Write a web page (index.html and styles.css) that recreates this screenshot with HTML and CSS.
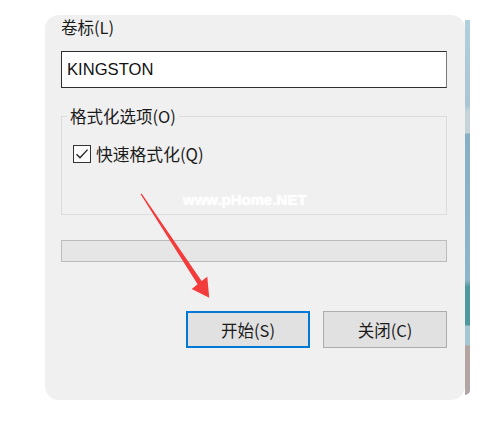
FILE: index.html
```html
<!DOCTYPE html>
<html lang="zh-CN">
<head>
<meta charset="utf-8">
<title>格式化</title>
<link rel="stylesheet" href="styles.css">
</head>
<body>
<div class="scene">
  <div class="dialog">
    <div class="field-label">卷标(L)</div>
    <div class="textbox">KINGSTON</div>
    <fieldset class="group">
      <legend class="group-title">格式化选项(O)</legend>
      <label class="check-row">
        <span class="checkbox">
          <svg width="16" height="16" viewBox="0 0 16 16"><path d="M2.5 8.2 L6 11.8 L13.6 3.6" fill="none" stroke="#222" stroke-width="1.3"/></svg>
        </span>
        <span class="check-text">快速格式化(Q)</span>
      </label>
    </fieldset>
    <div class="progress"></div>
    <div class="buttons">
      <div class="btn btn-default">开始(S)</div>
      <div class="btn">关闭(C)</div>
    </div>
  </div>
  <div class="behind"></div>
</div>
<div class="watermark">www.pHome.NET</div>
<svg class="arrow" width="498" height="421" viewBox="0 0 498 421">
  <polygon points="140.6,194.3 141.6,193.6 201.6,281.1 207.3,276.7 209.2,297.8 191.7,289 197.6,284.2" fill="#f43b3b"/>
</svg>
</body>
</html>
```
FILE: styles.css
```css
html, body {
  margin: 0;
  padding: 0;
  background: #ffffff;
}
body {
  position: relative;
  width: 498px;
  height: 421px;
  overflow: hidden;
  font-family: "Noto Sans CJK SC", "Microsoft YaHei", sans-serif;
  color: #1b1b1b;
}
.scene {
  display: flex;
  margin: 15px 0 0 45px;
}
.dialog {
  box-sizing: border-box;
  width: 420px;
  height: 385px;
  background: #f0f0f0;
  border-radius: 14px;
  padding: 1px 18px 0 16px;
  display: flex;
  flex-direction: column;
}
.behind {
  width: 5px;
  margin: 5px 0 5px 0;
  border-radius: 0 0 5px 0;
  background: linear-gradient(to bottom,
    #b3cedb 0px, #a9c6d4 85px,
    #c6d3d9 92px, #c6d3d9 113px,
    #86b0c3 114px, #8fb6c8 260px,
    #4f999c 267px, #4f999c 305px,
    #a6c7d1 306px, #a6c7d1 325px,
    #b4a4a1 326px, #b2a6a6 375px);
}
.field-label {
  font-size: 16.5px;
  line-height: 22px;
}
.textbox {
  box-sizing: border-box;
  margin-top: 13px;
  height: 37px;
  background: #ffffff;
  border: 1px solid #2e2e2e;
  border-right-color: #7a7a7a;
  padding: 0 0 0 5px;
  font-family: "Liberation Sans", Arial, sans-serif;
  font-size: 16.6px;
  line-height: 35px;
  color: #111;
}
.group {
  margin: 18px 0 0 0;
  padding: 19px 0 51px 0;
  border: 1px solid #dcdcdc;
  min-width: 0;
}
.group-title {
  margin-left: 5px;
  padding: 0 3px;
  font-size: 16.5px;
  line-height: 20px;
}
.check-row {
  display: flex;
  align-items: center;
  gap: 5px;
  height: 18px;
  margin-left: 11px;
}
.checkbox {
  box-sizing: border-box;
  width: 18px;
  height: 18px;
  border: 1px solid #333;
  background: #fbfbfb;
  display: flex;
  align-items: center;
  justify-content: center;
}
.check-text {
  font-size: 16.8px;
  line-height: 20px;
}
.progress {
  box-sizing: border-box;
  margin-top: 25px;
  height: 22px;
  background: #e6e6e6;
  border: 1px solid #bcbcbc;
}
.buttons {
  display: flex;
  justify-content: flex-end;
  gap: 13px;
  margin-top: 49px;
}
.btn {
  box-sizing: border-box;
  width: 124px;
  height: 37px;
  background: #e1e1e1;
  border: 1px solid #adadad;
  display: flex;
  align-items: center;
  justify-content: center;
  font-size: 16.5px;
}
.btn-default {
  border: 2px solid #0078d7;
}
.watermark {
  position: absolute;
  left: 183px;
  top: 190px;
  font-family: "Liberation Sans", Arial, sans-serif;
  font-weight: bold;
  font-size: 15px;
  line-height: 20px;
  color: #ffffff;
  text-shadow: 0 0 2px rgba(255,255,255,0.9);
}
.arrow {
  position: absolute;
  left: 0;
  top: 0;
  pointer-events: none;
}
```
